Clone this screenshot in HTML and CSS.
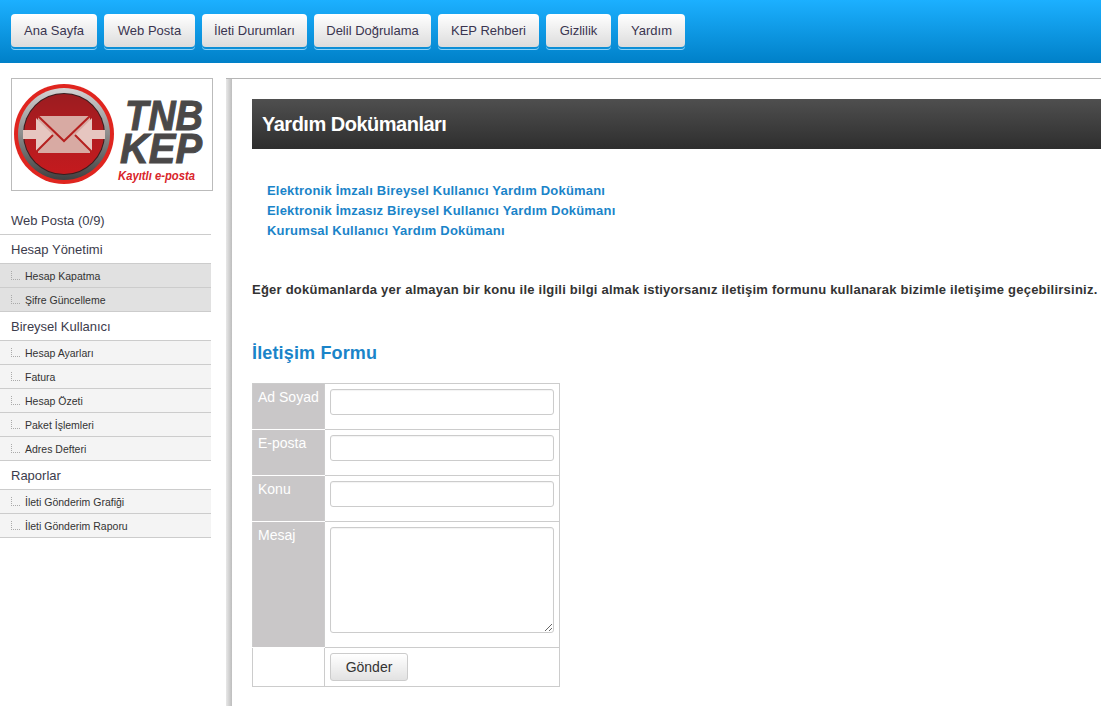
FILE: index.html
```html
<!DOCTYPE html>
<html lang="tr">
<head>
    <meta charset="UTF-8">
    <title>TNB KEP - Yardım</title>
    <link rel="stylesheet" href="styles.css">
</head>
<body>
    <div id="top-bar">
        <a class="top-button" href="#">Ana Sayfa</a>
        <a class="top-button" href="#">Web Posta</a>
        <a class="top-button" href="#">İleti Durumları</a>
        <a class="top-button" href="#">Delil Doğrulama</a>
        <a class="top-button" href="#">KEP Rehberi</a>
        <a class="top-button" href="#">Gizlilik</a>
        <a class="top-button" href="#">Yardım</a>
    </div>

    <div id="page">
        <div id="sidebar">
            <div class="logo-box">
                <svg width="200" height="111" viewBox="0 0 200 111">
                    <defs>
                        <linearGradient id="ring" x1="0" y1="0" x2="0" y2="1">
                            <stop offset="0" stop-color="#d4d4d4"/>
                            <stop offset="0.5" stop-color="#8c8c8c"/>
                            <stop offset="1" stop-color="#404040"/>
                        </linearGradient>
                        <linearGradient id="disc" x1="0" y1="0" x2="0" y2="1">
                            <stop offset="0" stop-color="#9c1c20"/>
                            <stop offset="0.45" stop-color="#b01c20"/>
                            <stop offset="1" stop-color="#c41a1e"/>
                        </linearGradient>
                    </defs>
                    <circle cx="52" cy="55" r="50" fill="#e0251f"/>
                    <circle cx="52" cy="55" r="46" fill="url(#ring)"/>
                    <circle cx="52" cy="55" r="41" fill="#3a1c1d"/>
                    <circle cx="52" cy="55" r="40" fill="url(#disc)"/>
                    <path d="M26 37 H78 V74 H26 Z" fill="#d8aaa3"/>
                    <path d="M11 51 H24 V39 L41 56 L24 73 V60 H11 Z" fill="#e6c6c0"/>
                    <path d="M93 51 H80 V39 L63 56 L80 73 V60 H93 Z" fill="#e6c6c0"/>
                    <path d="M26 37 L52 62 L78 37 M41 56 L24 73 M63 56 L80 73" fill="none" stroke="#b5201f" stroke-width="2"/>
                    <text class="logo-text" x="113" y="51" textLength="78" lengthAdjust="spacingAndGlyphs">TNB</text>
                    <text class="logo-text" x="108" y="84" textLength="82" lengthAdjust="spacingAndGlyphs">KEP</text>
                    <text class="logo-small" x="106" y="101" textLength="77" lengthAdjust="spacingAndGlyphs">Kayıtlı e-posta</text>
                </svg>
            </div>
            <div class="menu-title">Web Posta (0/9)</div>
            <div class="menu-title">Hesap Yönetimi</div>
            <div class="menu-item dark"><span class="tree"></span>Hesap Kapatma</div>
            <div class="menu-item dark"><span class="tree"></span>Şifre Güncelleme</div>
            <div class="menu-title">Bireysel Kullanıcı</div>
            <div class="menu-item"><span class="tree"></span>Hesap Ayarları</div>
            <div class="menu-item"><span class="tree"></span>Fatura</div>
            <div class="menu-item"><span class="tree"></span>Hesap Özeti</div>
            <div class="menu-item"><span class="tree"></span>Paket İşlemleri</div>
            <div class="menu-item"><span class="tree"></span>Adres Defteri</div>
            <div class="menu-title">Raporlar</div>
            <div class="menu-item"><span class="tree"></span>İleti Gönderim Grafiği</div>
            <div class="menu-item"><span class="tree"></span>İleti Gönderim Raporu</div>
        </div>

        <div id="content">
            <h1>Yardım Dokümanları</h1>
            <div class="doc-links">
                <a href="#">Elektronik İmzalı Bireysel Kullanıcı Yardım Dokümanı</a>
                <a href="#">Elektronik İmzasız Bireysel Kullanıcı Yardım Dokümanı</a>
                <a href="#">Kurumsal Kullanıcı Yardım Dokümanı</a>
            </div>
            <p class="info">Eğer dokümanlarda yer almayan bir konu ile ilgili bilgi almak istiyorsanız iletişim formunu kullanarak bizimle iletişime geçebilirsiniz.</p>
            <h2>İletişim Formu</h2>
            <table class="contact-form">
                <tr>
                    <th>Ad Soyad</th>
                    <td><input type="text"></td>
                </tr>
                <tr>
                    <th>E-posta</th>
                    <td><input type="text"></td>
                </tr>
                <tr>
                    <th>Konu</th>
                    <td><input type="text"></td>
                </tr>
                <tr>
                    <th>Mesaj</th>
                    <td><textarea></textarea></td>
                </tr>
                <tr>
                    <td class="empty"></td>
                    <td class="submit-cell"><button type="button">Gönder</button></td>
                </tr>
            </table>
        </div>
    </div>
</body>
</html>
```

FILE: styles.css
```css
html, body {
    margin: 0;
    padding: 0;
    height: 706px;
    overflow: hidden;
}

body {
    font-family: "Liberation Sans", Arial, sans-serif;
    background-color: #fff;
    color: #333;
}

#top-bar {
    height: 63px;
    box-sizing: border-box;
    padding: 14px 0 0 11px;
    display: grid;
    grid-template-columns: 86px 91px 105px 117px 101px 65px 67px;
    grid-template-rows: 33px;
    gap: 7px;
    background: linear-gradient(to bottom, #1cb0ff, #0080c8);
}

.top-button {
    display: flex;
    align-items: center;
    justify-content: center;
    font-size: 13px;
    color: #3a3550;
    text-decoration: none;
    border-radius: 4px;
    background: linear-gradient(to bottom, #ffffff, #dcdcdc);
    box-shadow: 0 2px 0 #0c8ed6, 0 3px 0 #8fd3f7;
}

#page {
    display: flex;
    align-items: flex-start;
    padding-top: 15px;
}

#sidebar {
    width: 211px;
    margin-right: 15px;
    flex-shrink: 0;
}

.logo-box {
    width: 200px;
    height: 111px;
    margin: 0 0 15px 11px;
    border: 1px solid #bbb;
}

.logo-box svg {
    display: block;
}

.logo-text {
    font-family: "Liberation Sans", Arial, sans-serif;
    font-size: 42px;
    font-weight: bold;
    font-style: italic;
    fill: #4a4848;
    stroke: #4a4848;
    stroke-width: 1;
}

.logo-small {
    font-family: "Liberation Sans", Arial, sans-serif;
    font-size: 12px;
    font-weight: bold;
    font-style: italic;
    fill: #d9252a;
}

.menu-title {
    height: 28px;
    line-height: 30px;
    padding-left: 11px;
    font-size: 13px;
    color: #3c3c4c;
    border-bottom: 1px solid #ccc;
}

.menu-item {
    height: 23px;
    padding-left: 11px;
    display: flex;
    align-items: center;
    font-size: 10.5px;
    color: #333;
    background-color: #f4f4f4;
    border-bottom: 1px solid #ccc;
}

.menu-item.dark {
    background-color: #e1e1e1;
}

.tree {
    width: 9px;
    height: 9px;
    margin-right: 5px;
    border-left: 1px dotted #aaa;
    border-bottom: 1px dotted #aaa;
    box-sizing: border-box;
}

#content {
    flex-grow: 1;
    min-width: 0;
    height: 628px;
    padding: 20px 0 0 26px;
    border-top: 1px solid #b5b5b5;
    box-sizing: border-box;
    background: linear-gradient(to right, #e8e8e8, #bdbdbd) 0 0 / 6px 100% no-repeat;
}

h1 {
    height: 50px;
    margin: 0;
    padding-left: 10px;
    font-size: 20px;
    line-height: 50px;
    letter-spacing: -0.5px;
    color: #fff;
    background: linear-gradient(to bottom, #4f4f4f, #2e2e2e);
}

.doc-links {
    margin: 32px 0 0 15px;
}

.doc-links a {
    display: block;
    height: 20px;
    line-height: 20px;
    font-size: 13px;
    font-weight: bold;
    letter-spacing: 0.2px;
    color: #1a84c9;
    text-decoration: none;
}

.info {
    margin: 39px 0 0;
    font-size: 13px;
    font-weight: bold;
    line-height: 20px;
    letter-spacing: 0.23px;
    color: #333;
    white-space: nowrap;
}

h2 {
    margin: 41px 0 0;
    font-size: 18px;
    line-height: 24px;
    letter-spacing: 0.15px;
    color: #1a84c9;
}

.contact-form {
    margin-top: 18px;
    width: 308px;
    border-collapse: collapse;
    border: 1px solid #ccc;
}

.contact-form th {
    width: 72px;
    padding: 4px 0 0 5px;
    font-size: 14px;
    font-weight: normal;
    line-height: 18px;
    text-align: left;
    vertical-align: top;
    white-space: nowrap;
    color: #fff;
    background-color: #c9c7c8;
    border-bottom: 1px solid #fff;
    box-sizing: border-box;
}

.contact-form td {
    padding: 5px 5px 14px;
    border: 1px solid #ccc;
    vertical-align: top;
}

.contact-form td.empty {
    padding: 0;
}

.contact-form td.submit-cell {
    padding: 5px;
}

input, textarea {
    display: block;
    width: 224px;
    box-sizing: border-box;
    border: 1px solid #ccc;
    border-radius: 3px;
    box-shadow: inset 0 1px 1px rgba(0, 0, 0, 0.05);
    margin: 0;
    background-color: #fff;
}

input {
    height: 26px;
}

textarea {
    height: 106px;
}

button {
    display: block;
    width: 78px;
    height: 28px;
    padding: 0;
    font-family: "Liberation Sans", Arial, sans-serif;
    font-size: 14px;
    color: #333;
    border: 1px solid #ccc;
    border-radius: 3px;
    background: linear-gradient(to bottom, #fff, #e2e2e2);
}
```
